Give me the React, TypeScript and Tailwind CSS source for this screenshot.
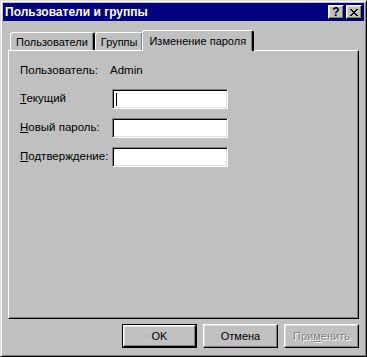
const raised = "bg-[#c0c0c0] border border-t-white border-l-white border-r-black border-b-black shadow-[inset_-1px_-1px_#808080,inset_1px_1px_#dfdfdf]";

const Field = ({ caret }: { caret?: boolean }) => (
  <div className="w-[116px] h-[20px] bg-white border border-t-[#808080] border-l-[#808080] border-r-white border-b-white shadow-[inset_1px_1px_#000,inset_-1px_-1px_#dfdfdf] flex items-center pl-[3px]">
    {caret && <div className="w-px h-[13px] bg-black" />}
  </div>
);

const Tab = ({ label, active }: { label: string; active?: boolean }) =>
  active ? (
    <div className="relative z-10 -mx-[2px] -mb-px h-[21px] px-[6px] pt-[2px] bg-[#c0c0c0] border-t border-l border-t-white border-l-white border-r-2 border-r-black rounded-t-[3px] shadow-[inset_-1px_0_#808080] flex items-start">
      {label}
    </div>
  ) : (
    <div className="h-[18px] mt-[2px] px-[5px] pt-[1px] bg-[#c0c0c0] border-t border-l border-t-white border-l-white border-r-2 border-r-black rounded-t-[3px] shadow-[inset_-1px_0_#808080] flex items-start">
      {label}
    </div>
  );

const Button = ({ children, def, disabled }: { children: React.ReactNode; def?: boolean; disabled?: boolean }) => (
  <div className={def ? "w-[75px] h-[24px] border border-black" : "w-[75px] h-[24px]"}>
    <div className={`${raised} w-full h-full flex items-center justify-center ${disabled ? "text-[#808080] [text-shadow:1px_1px_#fff]" : ""}`}>
      {children}
    </div>
  </div>
);

export default function App() {
  return (
    <div
      className="w-[367px] h-[357px] bg-[#c0c0c0] border border-t-[#dfdfdf] border-l-[#dfdfdf] border-r-black border-b-black shadow-[inset_1px_1px_#fff,inset_-1px_-1px_#808080] p-[2px] flex flex-col text-[11px] text-black"
      style={{ fontFamily: '"Liberation Sans", Arial, sans-serif' }}
    >
      <div className="h-[18px] bg-[#000080] flex items-center pl-[2px] pr-[2px]">
        <span className="text-white font-bold text-[12px] flex-1">Пользователи и группы</span>
        <div className={`${raised} w-[16px] h-[14px] flex items-center justify-center font-bold text-[12px] leading-none text-black`}>?</div>
        <div className={`${raised} ml-[2px] w-[16px] h-[14px] flex items-center justify-center`}>
          <svg width="8" height="7" viewBox="0 0 8 7" shapeRendering="crispEdges">
            <path d="M0 0h2v1H0zM6 0h2v1H6zM1 1h2v1H1zM5 1h2v1H5zM2 2h4v1H2zM3 3h2v1H3zM2 4h4v1H2zM1 5h2v1H1zM5 5h2v1H5zM0 6h2v1H0zM6 6h2v1H6z" fill="#000" />
          </svg>
        </div>
      </div>

      <div className="mt-[8px] mx-[5px] flex flex-col flex-1">
        <div className="flex pl-[2px] h-[21px] items-end">
          <Tab label="Пользователи" />
          <Tab label="Группы" />
          <Tab label="Изменение пароля" active />
        </div>
        <div className="h-[269px] border border-t-white border-l-white border-r-black border-b-black shadow-[inset_-1px_-1px_#808080] pl-[11px] pt-[12px] text-[11.5px]">
          <div className="flex h-[16px] items-center">
            <span className="w-[90px]">Пользователь:</span>
            <span>Admin</span>
          </div>
          <div className="flex flex-col gap-[9px] mt-[10px]">
            <div className="flex items-center">
              <span className="w-[92px]"><u>Т</u>екущий</span>
              <Field caret />
            </div>
            <div className="flex items-center">
              <span className="w-[92px]"><u>Н</u>овый пароль:</span>
              <Field />
            </div>
            <div className="flex items-center">
              <span className="w-[92px]"><u>П</u>одтверждение:</span>
              <Field />
            </div>
          </div>
        </div>
        <div className="flex justify-end gap-[6px] mt-[5px]">
          <Button def>OK</Button>
          <Button>Отмена</Button>
          <Button disabled>При<u>м</u>енить</Button>
        </div>
      </div>
    </div>
  );
}
